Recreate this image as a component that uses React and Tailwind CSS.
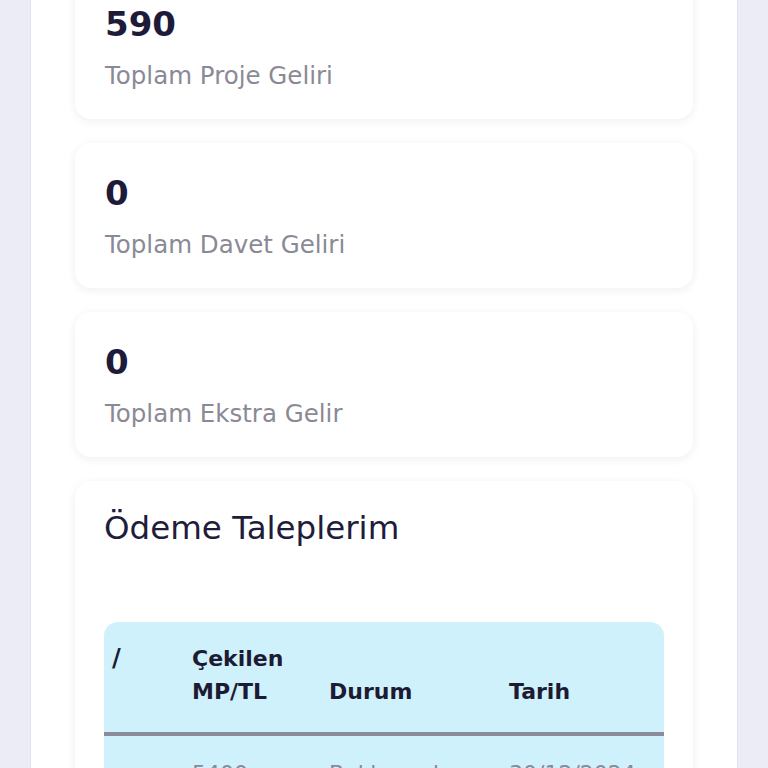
import React from 'react';

const font = { fontFamily: '"DejaVu Sans", "Noto Sans", sans-serif' };

const stats = [
  { value: '590', label: 'Toplam Proje Geliri' },
  { value: '0', label: 'Toplam Davet Geliri' },
  { value: '0', label: 'Toplam Ekstra Gelir' },
];

function StatCard({ value, label, first }) {
  return (
    <div
      className={`bg-white rounded-2xl shadow-[0_2px_10px_rgba(30,30,60,0.07)] px-[30px] pt-[30px] pb-[27px] ${first ? 'mt-[-26px]' : ''}`}
    >
      <div className="text-[34px] leading-[40px] font-semibold text-[#1e1a3a]">{value}</div>
      <div className="mt-[15px] text-[24.5px] leading-[33px] text-[#8a8a96]">{label}</div>
    </div>
  );
}

export default function App() {
  return (
    <div className="min-h-[768px] h-[768px] overflow-hidden bg-[#ececf6]" style={font}>
      <div className="mx-[30px] h-full bg-white border-x border-[#e2e2ee] px-[44px] flex flex-col gap-6">
        {stats.map((s, i) => (
          <StatCard key={s.label} {...s} first={i === 0} />
        ))}

        <div className="bg-white rounded-2xl shadow-[0_2px_10px_rgba(30,30,60,0.07)] px-[29px] pt-[30px]">
          <h2 className="text-[32.5px] leading-[34px] text-[#211c3a]">Ödeme Taleplerim</h2>

          <div className="mt-[77px] rounded-t-[14px] overflow-hidden bg-[#cff1fb]">
            <table className="w-full border-collapse text-left">
              <thead>
                <tr className="border-b-[4px] border-[#8b8c9a]">
                  <th className="align-top w-[88px] pl-2 pt-[20px] pb-[24px] text-[24px] leading-[33px] font-semibold text-[#1d1b33]">/</th>
                  <th className="align-bottom w-[137px] pt-[20px] pb-[24px] text-[22px] leading-[33px] font-semibold text-[#1d1b33]">
                    Çekilen<br />MP/TL
                  </th>
                  <th className="align-bottom w-[180px] pt-[20px] pb-[24px] text-[22px] leading-[33px] font-semibold text-[#1d1b33]">Durum</th>
                  <th className="align-bottom pt-[20px] pb-[24px] text-[22px] leading-[33px] font-semibold text-[#1d1b33]">Tarih</th>
                </tr>
              </thead>
              <tbody>
                <tr>
                  <td className="pl-2 pt-[21px] pb-[24px] text-[22px] leading-[33px] text-[#8a8a96]"></td>
                  <td className="pt-[21px] pb-[24px] text-[22px] leading-[33px] text-[#8a8a96]">5400</td>
                  <td className="pt-[21px] pb-[24px] text-[22px] leading-[33px] text-[#8a8a96]">Beklemede</td>
                  <td className="pt-[21px] pb-[24px] text-[22px] leading-[33px] text-[#8a8a96] whitespace-nowrap">30/12/2024</td>
                </tr>
              </tbody>
            </table>
          </div>
        </div>
      </div>
    </div>
  );
}
